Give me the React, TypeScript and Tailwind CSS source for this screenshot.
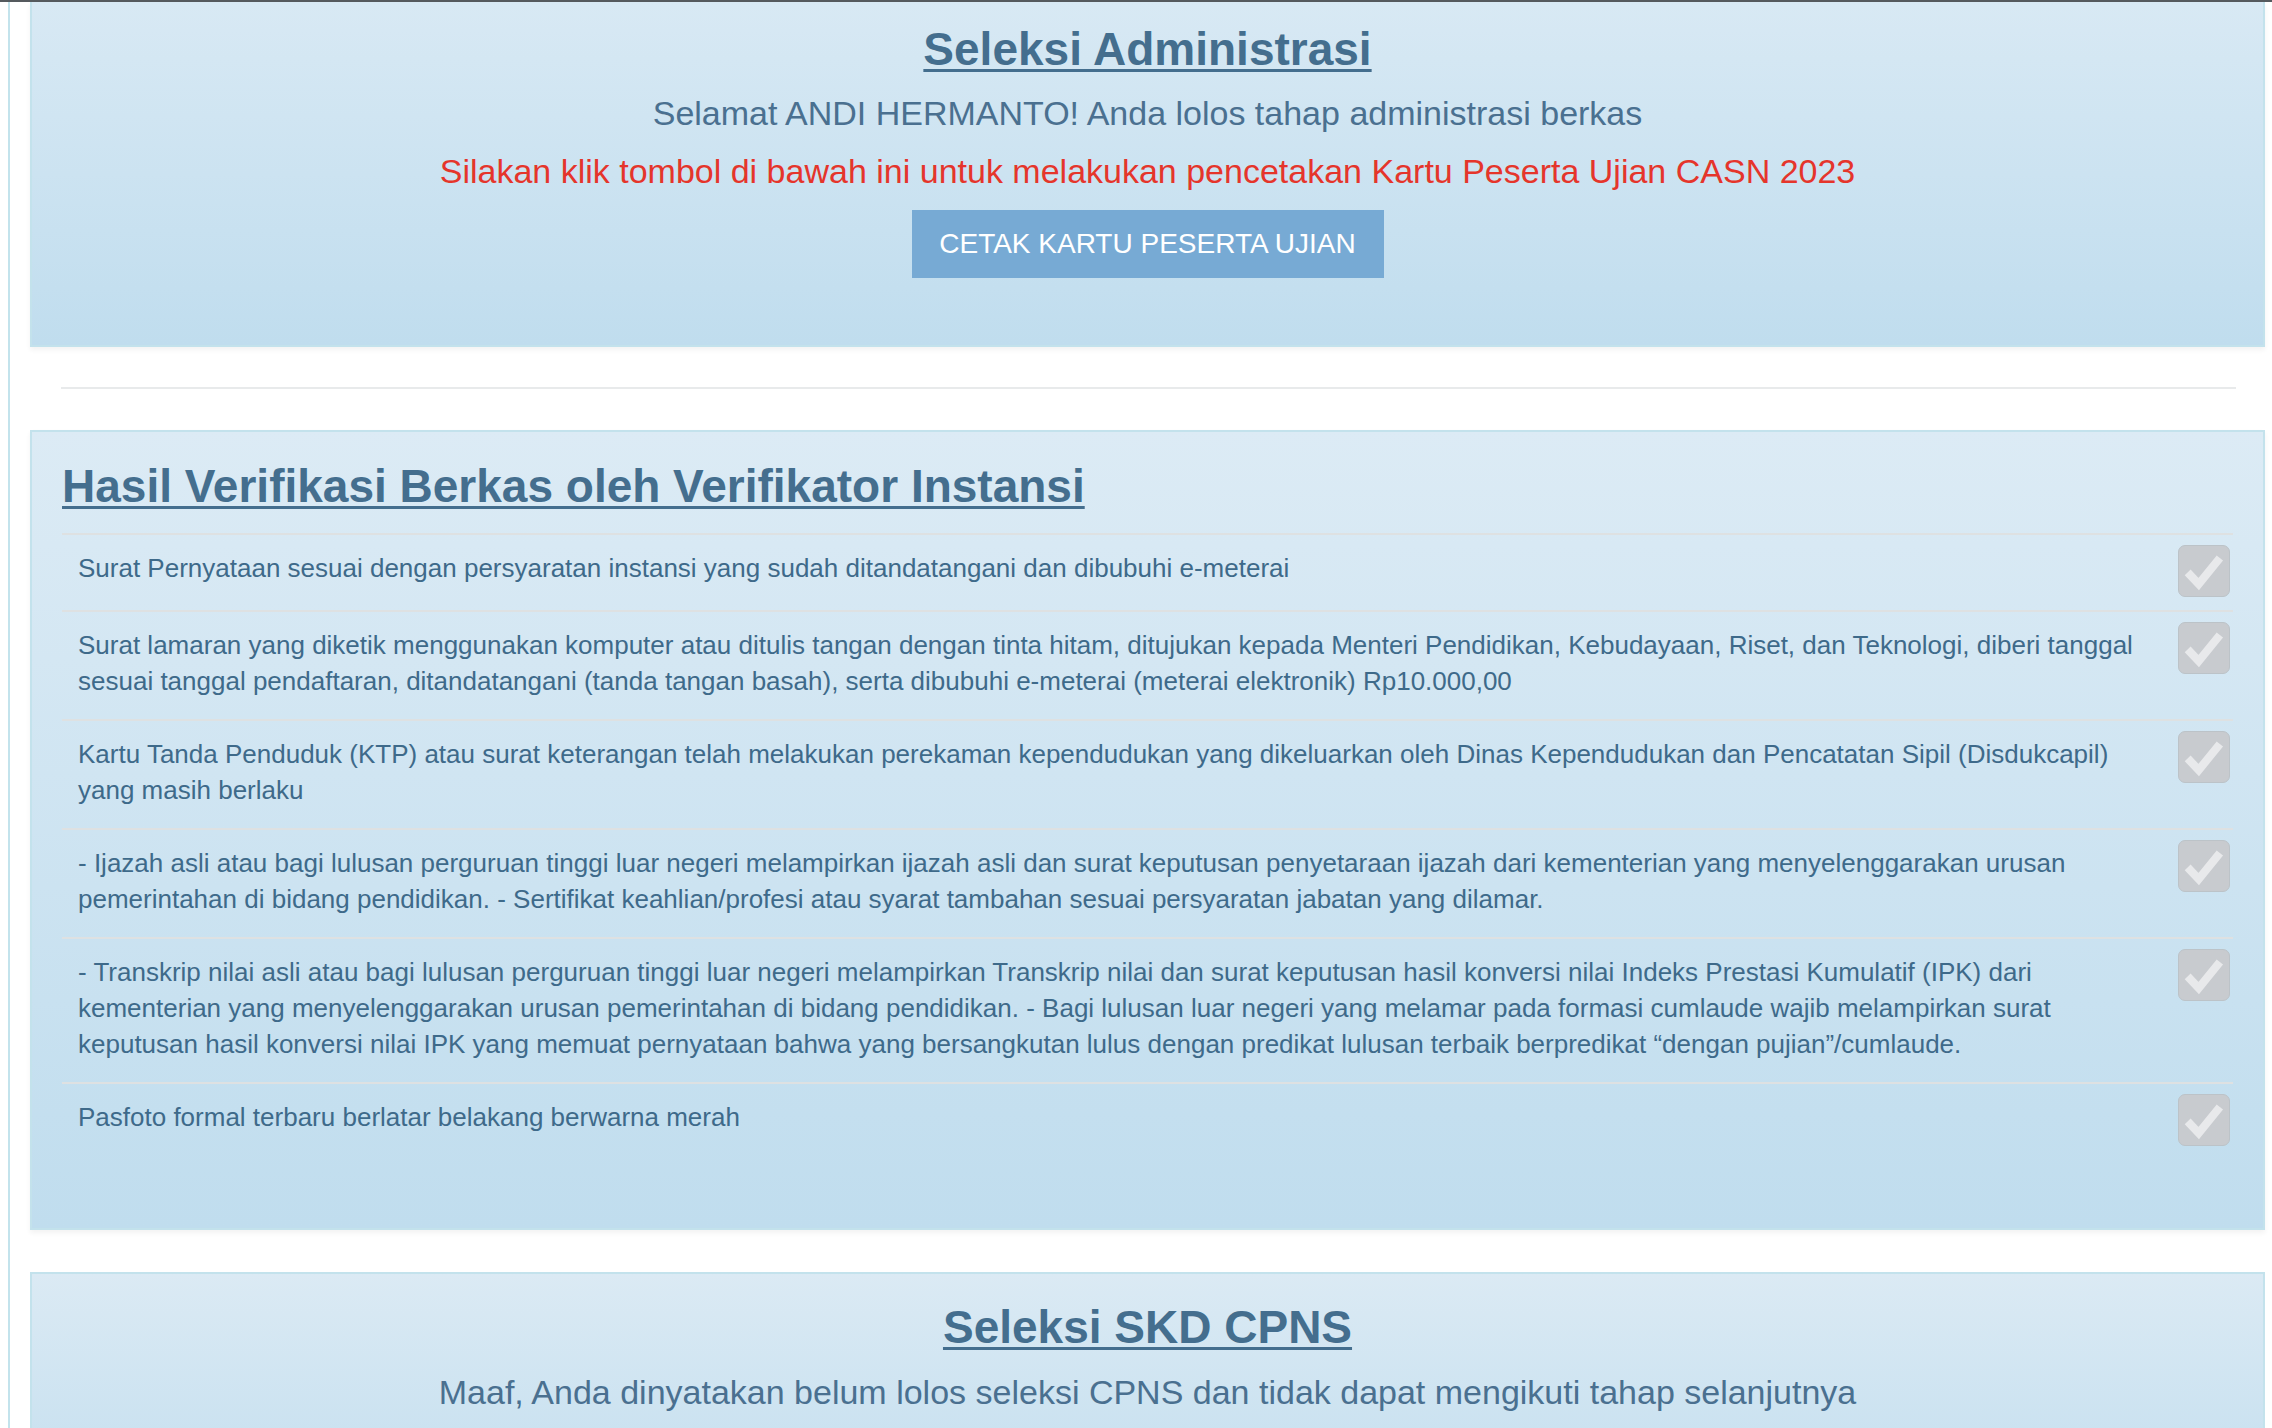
const BERKAS = [
  "Surat Pernyataan sesuai dengan persyaratan instansi yang sudah ditandatangani dan dibubuhi e-meterai",
  "Surat lamaran yang diketik menggunakan komputer atau ditulis tangan dengan tinta hitam, ditujukan kepada Menteri Pendidikan, Kebudayaan, Riset, dan Teknologi, diberi tanggal sesuai tanggal pendaftaran, ditandatangani (tanda tangan basah), serta dibubuhi e-meterai (meterai elektronik) Rp10.000,00",
  "Kartu Tanda Penduduk (KTP) atau surat keterangan telah melakukan perekaman kependudukan yang dikeluarkan oleh Dinas Kependudukan dan Pencatatan Sipil (Disdukcapil) yang masih berlaku",
  "- Ijazah asli atau bagi lulusan perguruan tinggi luar negeri melampirkan ijazah asli dan surat keputusan penyetaraan ijazah dari kementerian yang menyelenggarakan urusan pemerintahan di bidang pendidikan. - Sertifikat keahlian/profesi atau syarat tambahan sesuai persyaratan jabatan yang dilamar.",
  "- Transkrip nilai asli atau bagi lulusan perguruan tinggi luar negeri melampirkan Transkrip nilai dan surat keputusan hasil konversi nilai Indeks Prestasi Kumulatif (IPK) dari kementerian yang menyelenggarakan urusan pemerintahan di bidang pendidikan. - Bagi lulusan luar negeri yang melamar pada formasi cumlaude wajib melampirkan surat keputusan hasil konversi nilai IPK yang memuat pernyataan bahwa yang bersangkutan lulus dengan predikat lulusan terbaik berpredikat \u201cdengan pujian\u201d/cumlaude.",
  "Pasfoto formal terbaru berlatar belakang berwarna merah",
];

function CheckBox() {
  return (
    <div className="w-[52px] h-[52px] mb-[3px] shrink-0 rounded-[7px] border border-[#bcc3c8] bg-[#c8cbcf] flex items-center justify-center">
      <svg width="52" height="52" viewBox="0 0 52 52" fill="none">
        <path d="M9 27.5l11.5 12L42.5 12.5" stroke="#e8e9eb" strokeWidth="8.5" strokeLinecap="butt" strokeLinejoin="miter" />
      </svg>
    </div>
  );
}

export default function App() {
  return (
    <div className="h-screen overflow-hidden bg-white font-['Liberation_Sans',Arial,sans-serif]">
      <div className="h-[2px] bg-[#555a5e]" />

      <div className="ml-[8px] border-l-2 border-[#c3e3ec] pl-[20px] pr-[7px]">
        {/* Seleksi Administrasi */}
        <div className="border-x-2 border-b-2 border-[#c3e2ec] bg-linear-to-b from-[#d8e9f4] to-[#c0ddee] pt-[22px] pb-[67px] text-center shadow-[0_3px_5px_rgba(0,0,0,0.05)]">
          <h2 className="text-[46px] leading-[50px] font-bold text-[#446e8e] underline decoration-[3px] underline-offset-[4px]">
            Seleksi Administrasi
          </h2>
          <p className="mt-[10px] text-[34px] leading-[58px] text-[#4a7090]">
            Selamat ANDI HERMANTO! Anda lolos tahap administrasi berkas
          </p>
          <p className="text-[34px] leading-[58px] text-[#e5352b]">
            Silakan klik tombol di bawah ini untuk melakukan pencetakan Kartu Peserta Ujian CASN 2023
          </p>
          <button
            type="button"
            className="mt-[10px] w-[472px] h-[68px] bg-[#77aad4] text-white text-[28px] leading-none"
          >
            CETAK KARTU PESERTA UJIAN
          </button>
        </div>

        <div className="mt-[40px] ml-[31px] mr-[29px] h-[2px] bg-[#e8eaeb]" />

        {/* Hasil verifikasi */}
        <div className="mt-[41px] border-2 border-[#c3e2ec] bg-linear-to-b from-[#dcebf5] to-[#c0ddee] px-[30px] pt-[29px] pb-[69px] shadow-[0_3px_5px_rgba(0,0,0,0.05)]">
          <h2 className="text-[46px] leading-[50px] font-bold text-[#446e8e] underline decoration-[3px] underline-offset-[4px]">
            Hasil Verifikasi Berkas oleh Verifikator Instansi
          </h2>
          <div className="mt-[22px]">
            {BERKAS.map((b, i) => (
              <div key={i} className="flex items-start border-t-2 border-[#dee1e2] py-[10px] pl-[16px] pr-[3px]">
                <div className="flex-1 pt-[5px] pb-[10px] pr-[19px] text-[26px] leading-[36px] text-[#3e6a8a]">
                  {b}
                </div>
                <CheckBox />
              </div>
            ))}
          </div>
        </div>

        {/* Seleksi SKD */}
        <div className="mt-[42px] border-2 border-[#c3e2ec] bg-linear-to-b from-[#dbeaf4] to-[#c0ddee] pt-[28px] pb-[120px] text-center">
          <h2 className="text-[46px] leading-[50px] font-bold text-[#446e8e] underline decoration-[3px] underline-offset-[4px]">
            Seleksi SKD CPNS
          </h2>
          <p className="mt-[11px] text-[34px] leading-[58px] text-[#4a7090]">
            Maaf, Anda dinyatakan belum lolos seleksi CPNS dan tidak dapat mengikuti tahap selanjutnya
          </p>
        </div>
      </div>
    </div>
  );
}
